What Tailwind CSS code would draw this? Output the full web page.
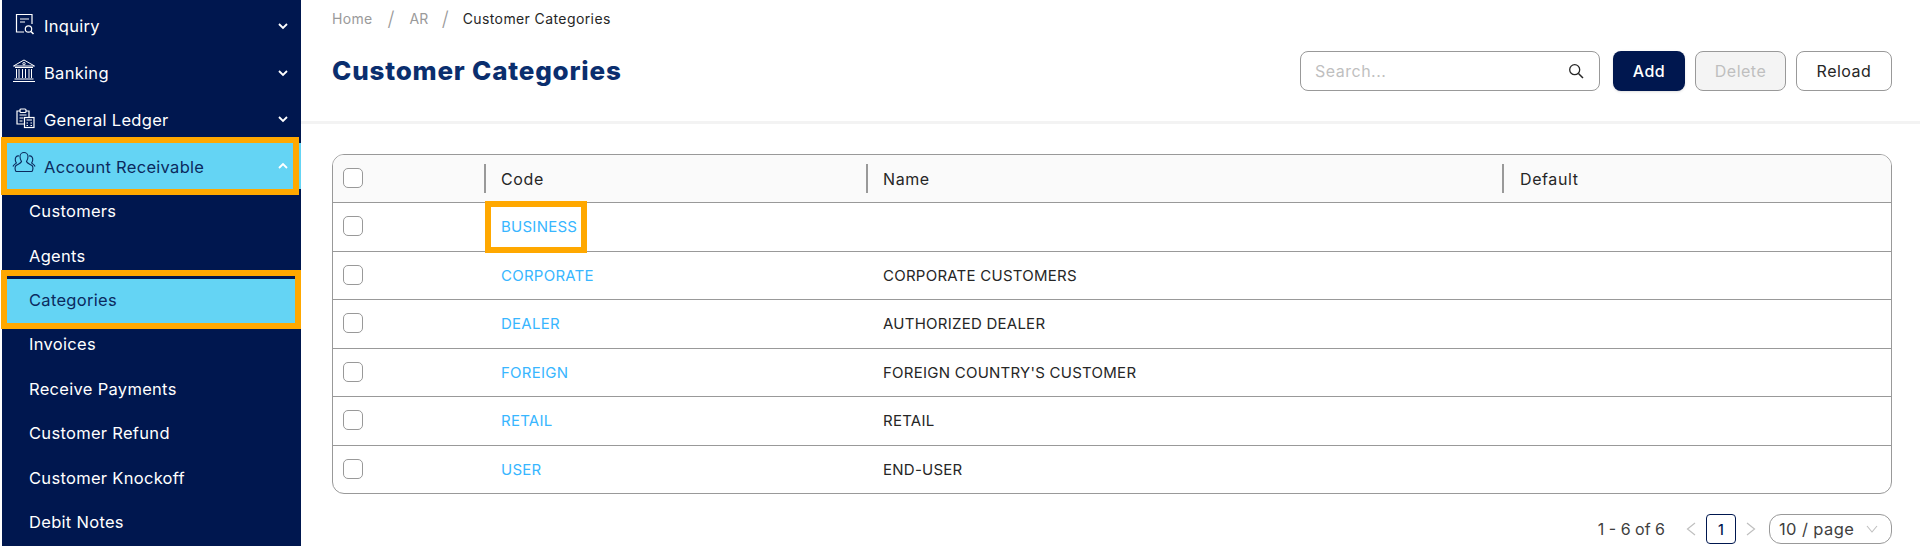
<!DOCTYPE html>
<html>
<head>
<meta charset="utf-8">
<script src="https://cdn.jsdelivr.net/npm/@tailwindcss/browser@4"></script>
</head>
<body class="bg-white font-['Inter',sans-serif] text-[#262626]">
<div class="relative flex h-[546px] w-[1920px] overflow-hidden">
  <!-- Sidebar -->
  <aside class="ml-[2px] flex h-[546px] w-[299px] shrink-0 flex-col overflow-hidden bg-[#00174f] pt-[3px] text-[16.5px] tracking-[0.3px] text-white">
    <div class="flex h-[47px] shrink-0 items-center pr-[12px] pb-[1px] pl-[12px]">
      <svg class="h-[22px] w-[22px] shrink-0 -translate-y-[2px]" viewBox="0 0 22 22" fill="none" stroke="#fff" stroke-width="1.2"><path d="M10 19H2.500V1.500H18V11"/><path d="M6 6h9M6 9h5"/><circle cx="14.500" cy="16" r="3.200"/><path d="M17 18.500l2.500 2.500" stroke-width="1.600"/></svg>
      <span class="ml-[8px]">Inquiry</span>
      <svg class="ml-auto h-[12px] w-[12px]" viewBox="0 0 12 12" fill="none" stroke="#fff" stroke-width="1.800"><path d="M2 4l4 4 4-4"/></svg>
    </div>
    <div class="flex h-[47px] shrink-0 items-center pr-[12px] pb-[1px] pl-[10px]">
      <svg class="h-[24px] w-[24px] shrink-0 -translate-y-[2px]" viewBox="0 0 24 24" fill="none" stroke="#fff" stroke-width="1"><path d="M12 1L1.500 7h21zM3 8.500h18M4.500 10v9M7 10v9M10.500 10v9M13.500 10v9M17 10v9M19.500 10v9M2.500 20h19M1 22.500h22"/><circle cx="12" cy="4.700" r="1.200"/></svg>
      <span class="ml-[8px]">Banking</span>
      <svg class="ml-auto h-[12px] w-[12px]" viewBox="0 0 12 12" fill="none" stroke="#fff" stroke-width="1.800"><path d="M2 4l4 4 4-4"/></svg>
    </div>
    <div class="flex h-[46px] shrink-0 items-center pt-[1px] pr-[12px] pl-[12px]">
      <svg class="h-[22px] w-[22px] shrink-0 -translate-y-[3px]" viewBox="0 0 22 22" fill="none" stroke="#fff" stroke-width="1.200"><path d="M10 17H3V4h3M12 4h3v6"/><rect x="6" y="2" width="6" height="3.500" rx="1"/><path d="M5.500 8h7M5.500 11h4M5.500 14h3"/><rect x="10.500" y="10.500" width="9.500" height="10"/><path d="M12.500 13h5.500M12.500 16h1.500M16.500 16h1.500M12.500 18.500h1.500M16.500 18.500h1.500"/></svg>
      <span class="ml-[8px]">General Ledger</span>
      <svg class="ml-auto h-[12px] w-[12px] -translate-y-[2px]" viewBox="0 0 12 12" fill="none" stroke="#fff" stroke-width="1.800"><path d="M2 4l4 4 4-4"/></svg>
    </div>
    <div class="flex h-[46px] shrink-0 items-center bg-[#64d4f4] pt-[2px] pr-[12px] pl-[10px] text-[#0b2a5e]">
      <svg class="h-[24px] w-[24px] shrink-0 -translate-y-[4px]" viewBox="0 0 24 24" fill="none" stroke="#0b2a5e" stroke-width="1.100"><path d="M8 5.500C8 3 10 1.500 12 1.500S16 3 16 5.500C16 8 15 9.500 14.500 10.500C15 12.500 18 13 20 14.500C21.500 16 21 19 20 20.500H4C3 19 2.500 16 4 14.500C6 13 9 12.500 9.500 10.500C9 9.500 8 8 8 5.500Z"/><path d="M7 5C4.500 4.500 3 6.500 3.300 9C3.400 10.500 4 11 4.400 12C3.500 13 1.500 13.500 1 15.500M17 5C19.500 4.500 21 6.500 20.700 9C20.600 10.500 20 11 19.600 12C20.500 13 22.500 13.500 23 15.500"/></svg>
      <span class="ml-[8px]">Account Receivable</span>
      <svg class="ml-auto h-[12px] w-[12px] -translate-y-[1px]" viewBox="0 0 12 12" fill="none" stroke="#fff" stroke-width="1.800"><path d="M2 8l4-4 4 4"/></svg>
    </div>
    <div class="flex h-[44px] shrink-0 items-center pl-[27px]">Customers</div>
    <div class="flex h-[46px] shrink-0 items-center pl-[27px]">Agents</div>
    <div class="flex h-[44px] shrink-0 items-center bg-[#64d4f4] pb-[1px] pl-[27px] text-[#0b2a5e]">Categories</div>
    <div class="flex h-[44px] shrink-0 items-center pb-[1px] pl-[27px]">Invoices</div>
    <div class="flex h-[45px] shrink-0 items-center pl-[27px]">Receive Payments</div>
    <div class="flex h-[44px] shrink-0 items-center pb-[1px] pl-[27px]">Customer Refund</div>
    <div class="flex h-[45px] shrink-0 items-center pl-[27px]">Customer Knockoff</div>
    <div class="flex h-[44px] shrink-0 items-center pb-[1px] pl-[27px]">Debit Notes</div>
  </aside>

  <!-- Main -->
  <main class="flex min-w-0 flex-1 flex-col">
    <header class="h-[121px] shrink-0 px-[31px]">
      <nav class="flex h-[37px] items-center text-[14px]">
        <span class="tracking-[0.3px] text-[#9a9a9a]">Home</span>
        <span class="ml-[15px] text-[20px] font-light text-[#9a9a9a]">/</span>
        <span class="ml-[15px] tracking-[0.3px] text-[#9a9a9a]">AR</span>
        <span class="ml-[13px] text-[20px] font-light text-[#9a9a9a]">/</span>
        <span class="ml-[14px] tracking-[0.4px]">Customer Categories</span>
      </nav>
      <div class="flex items-start justify-between">
        <h1 class="mt-[17px] text-[26px] leading-[34px] font-extrabold tracking-[0.8px] text-[#0a2e6e]">Customer Categories</h1>
        <div class="mt-[14px] mr-[-3px] flex items-center text-[16px] tracking-[0.5px]">
          <div class="flex h-[40px] w-[300px] items-center justify-between rounded-[8px] border border-[#999] pr-[15px] pl-[14px] text-[#bfbfbf]">
            <span>Search...</span>
            <svg class="h-[16px] w-[16px]" viewBox="0 0 16 16" fill="none" stroke="#262626" stroke-width="1.300"><circle cx="6.700" cy="6.700" r="5"/><path d="M10.500 10.500l4.500 4.500" stroke-width="1.500"/></svg>
          </div>
          <button class="ml-[13px] h-[40px] w-[72px] rounded-[8px] bg-[#00174f] font-medium text-white shadow-sm">Add</button>
          <button class="ml-[10px] h-[40px] w-[91px] rounded-[8px] border border-[#999] bg-[#f4f4f4] text-[#bfbfbf]">Delete</button>
          <button class="ml-[10px] h-[40px] w-[96px] rounded-[8px] border border-[#999] bg-white">Reload</button>
        </div>
      </div>
    </header>
    <div class="h-[3px] shrink-0 bg-[#f3f3f3]"></div>
    <div class="flex flex-1 flex-col px-[31px] pt-[30px] pr-[28px]">
      <div class="overflow-hidden rounded-[12px] border border-[#999] text-[15px] tracking-[0.25px]">
        <div class="grid h-[47px] grid-cols-[151px_382px_636px_1fr] items-center bg-[#fafafa] text-[16px] tracking-[0.6px]">
          <div class="pl-[10px]"><div class="h-[20px] w-[20px] -translate-y-[1px] rounded-[5px] border border-[#999] bg-white"></div></div>
          <div class="flex h-[29px] items-center border-l-2 border-[#999] pl-[15px]">Code</div>
          <div class="flex h-[29px] items-center border-l-2 border-[#999] pl-[15px]">Name</div>
          <div class="flex h-[29px] items-center border-l-2 border-[#999] pl-[16px]">Default</div>
        </div>
        <div class="grid h-[49px] grid-cols-[151px_382px_636px_1fr] items-center border-t border-[#999]">
          <div class="pl-[10px]"><div class="h-[20px] w-[20px] -translate-y-[1px] rounded-[5px] border border-[#999]"></div></div>
          <div class="pt-[1px] pl-[17px] text-[#38b6ff]">BUSINESS</div><div class="pl-[17px]"></div><div></div>
        </div>
        <div class="grid h-[48px] grid-cols-[151px_382px_636px_1fr] items-center border-t border-[#999]">
          <div class="pl-[10px]"><div class="h-[20px] w-[20px] -translate-y-[1px] rounded-[5px] border border-[#999]"></div></div>
          <div class="pt-[1px] pl-[17px] text-[#38b6ff]">CORPORATE</div><div class="pt-[1px] pl-[17px]">CORPORATE CUSTOMERS</div><div></div>
        </div>
        <div class="grid h-[49px] grid-cols-[151px_382px_636px_1fr] items-center border-t border-[#999]">
          <div class="pl-[10px]"><div class="h-[20px] w-[20px] -translate-y-[1px] rounded-[5px] border border-[#999]"></div></div>
          <div class="pt-[1px] pl-[17px] text-[#38b6ff]">DEALER</div><div class="pt-[1px] pl-[17px]">AUTHORIZED DEALER</div><div></div>
        </div>
        <div class="grid h-[48px] grid-cols-[151px_382px_636px_1fr] items-center border-t border-[#999]">
          <div class="pl-[10px]"><div class="h-[20px] w-[20px] -translate-y-[1px] rounded-[5px] border border-[#999]"></div></div>
          <div class="pt-[1px] pl-[17px] text-[#38b6ff]">FOREIGN</div><div class="pt-[1px] pl-[17px]">FOREIGN COUNTRY'S CUSTOMER</div><div></div>
        </div>
        <div class="grid h-[49px] grid-cols-[151px_382px_636px_1fr] items-center border-t border-[#999]">
          <div class="pl-[10px]"><div class="h-[20px] w-[20px] -translate-y-[1px] rounded-[5px] border border-[#999]"></div></div>
          <div class="pt-[1px] pl-[17px] text-[#38b6ff]">RETAIL</div><div class="pt-[1px] pl-[17px]">RETAIL</div><div></div>
        </div>
        <div class="grid h-[48px] grid-cols-[151px_382px_636px_1fr] items-center border-t border-[#999]">
          <div class="pl-[10px]"><div class="h-[20px] w-[20px] -translate-y-[1px] rounded-[5px] border border-[#999]"></div></div>
          <div class="pt-[1px] pl-[17px] text-[#38b6ff]">USER</div><div class="pt-[1px] pl-[17px]">END-USER</div><div></div>
        </div>
      </div>
      <div class="mt-[20px] flex items-center justify-end text-[16px]">
        <span class="text-[#404040]">1 - 6 of 6</span>
        <svg class="ml-[21px] h-[14px] w-[10px]" viewBox="0 0 10 14" fill="none" stroke="#bfbfbf" stroke-width="1.200"><path d="M9 1L1.500 7 9 13"/></svg>
        <div class="ml-[10px] flex h-[30px] w-[30px] items-center justify-center rounded-[4px] border border-[#00174f] text-[14px] font-medium text-[#00174f]">1</div>
        <svg class="ml-[10px] h-[14px] w-[10px]" viewBox="0 0 10 14" fill="none" stroke="#bfbfbf" stroke-width="1.200"><path d="M1 1l7.500 6L1 13"/></svg>
        <div class="ml-[13px] flex h-[30px] w-[123px] items-center justify-between rounded-[12px] border border-[#999] pr-[13px] pl-[9px] text-[16.5px] tracking-[0.4px] text-[#404040]">
          <span>10 / page</span>
          <svg class="h-[8px] w-[12px]" viewBox="0 0 12 8" fill="none" stroke="#bfbfbf" stroke-width="1.100"><path d="M1 1l5 6 5-6"/></svg>
        </div>
      </div>
    </div>
  </main>

  <!-- Annotation highlights drawn over the screen -->
  <div class="pointer-events-none absolute top-[137px] left-[1px] h-[58px] w-[298px] border-[6px] border-[#ffa800]"></div>
  <div class="pointer-events-none absolute top-[270px] left-[1px] h-[59px] w-[300px] border-[6px] border-[#ffa800]"></div>
  <div class="pointer-events-none absolute top-[201px] left-[485px] h-[52px] w-[102px] border-[6px] border-[#ffa800]"></div>
</div>
</body>
</html>
